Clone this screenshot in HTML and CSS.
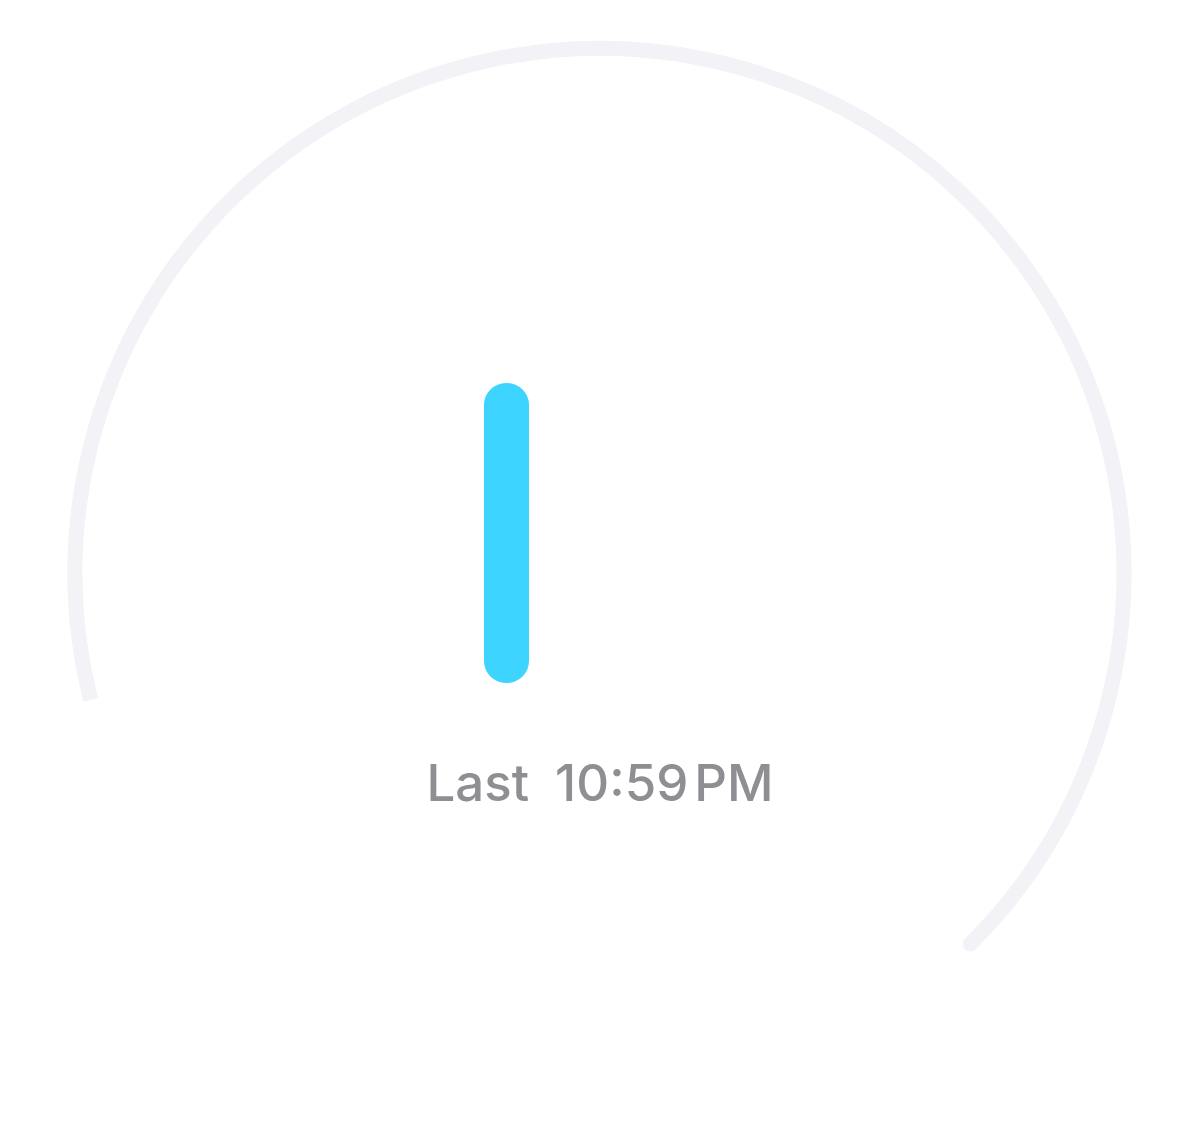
FILE: index.html
```html
<!DOCTYPE html>
<html lang="en">
<head>
    <meta charset="UTF-8">
    <meta name="viewport" content="width=device-width, initial-scale=1.0">
    <title>Activity Gauge</title>
    <link rel="stylesheet" href="styles.css">
</head>
<body class="gauge-body">
    <div class="gauge">
        <!-- track ring: starts flat on the left, rounded at the right end -->
        <svg class="gauge-track" width="1200" height="1146" viewBox="0 0 1200 1146">
            <path d="M 90.6 699.9 A 524.5 524.5 0 1 1 970.4 943.9"
                  fill="none" stroke="#f2f2f7" stroke-width="15" stroke-linecap="butt"/>
            <circle cx="970.4" cy="943.9" r="7.5" fill="#f2f2f7"/>
        </svg>

        <div class="readout">
            <div class="bars">
                <div class="bar"></div>
            </div>
            <div class="last">
                <span class="last-label">Last</span>
                <span class="last-time">10:59</span>
                <span class="last-period">PM</span>
            </div>
        </div>
    </div>
</body>
</html>
```

FILE: styles.css
```css
.gauge-body {
    margin: 0;
    background-color: #fff;
    font-family: Inter, "Noto Sans", sans-serif;
}

.gauge {
    position: relative;
    width: 1200px;
    height: 1146px;
    overflow: hidden;
}

.gauge-track {
    position: absolute;
    top: 0;
    left: 0;
}

.readout {
    position: relative;
    display: flex;
    flex-direction: column;
    align-items: center;
    padding-top: 383px;
}

.bars {
    display: flex;
    justify-content: center;
    height: 300px;
}

.bar {
    width: 45px;
    height: 300px;
    margin-right: 187px;
    border-radius: 22px;
    background-color: #3dd4ff;
}

.last {
    display: flex;
    align-items: baseline;
    margin-top: 67px;
    font-size: 51px;
    font-weight: 500;
    line-height: 66px;
    color: #8e8e93;
}

.last-label {
    margin-right: 26px;
}

.last-time {
    margin-right: 6px;
}
```
